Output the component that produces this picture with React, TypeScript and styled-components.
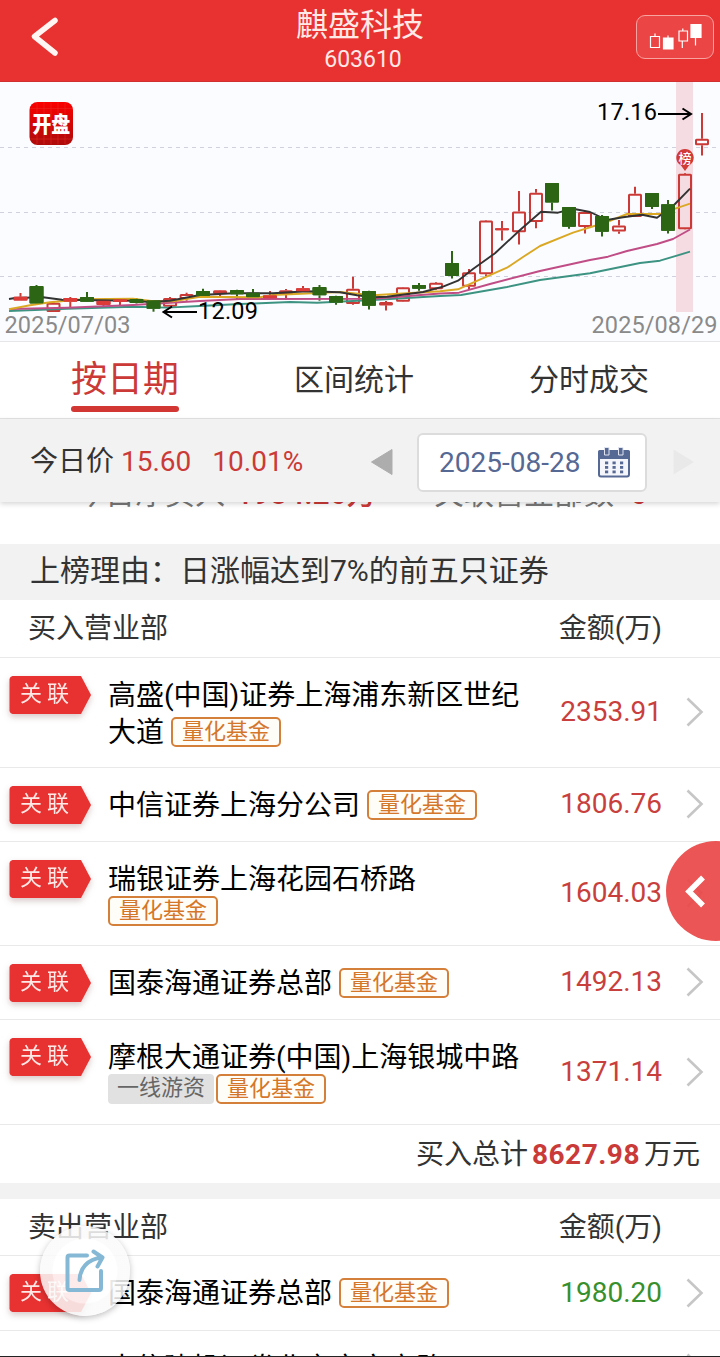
import React from "react";
import styled, { createGlobalStyle } from "styled-components";

const RED = "#e83131";
const UP = "#cb3a37";
const DOWN = "#2c6615";

const Global = createGlobalStyle`
  *, *::before, *::after { box-sizing: border-box; }
  html, body { margin: 0; padding: 0; background: #fff; }
  body {
    font-family: Roboto, "Noto Sans CJK SC", sans-serif;
    color: #333;
    overflow: hidden;
  }
`;

const Page = styled.div`
  position: relative;
  width: 720px;
  height: 1357px;
  overflow: hidden;
  background: #fff;
  border-bottom: 1px solid #222;
  display: flex;
  flex-direction: column;
  > * { flex-shrink: 0; }
`;

const Header = styled.header`
  height: 82px;
  background: ${RED};
  border-bottom: 1px solid #d0302f;
  display: grid;
  grid-template-columns: 110px 1fr 110px;
  padding: 0 6px 0 22px;
  color: #fff;
`;
const BackButton = styled.div`
  padding: 10px 0 0 0;
  height: 74px;
  svg { display: block; }
`;
const Titles = styled.div`
  display: flex;
  flex-direction: column;
  align-items: center;
  padding: 8px 10px 0 0;
  color: #ffe9e6;
`;
const Title = styled.div`
  margin-right: 6px;
  font-size: 32px;
  line-height: 35px;
`;
const Code = styled.div`
  font-size: 23px;
  line-height: 33px;
`;
const KlineButton = styled.div`
  justify-self: end;
  margin-top: 15px;
  width: 78px;
  height: 44px;
  border: 1px solid #f7a3a0;
  border-radius: 9px;
  background: #eb4545;
  svg { display: block; margin: -1px; }
`;

const ChartArea = styled.section`
  height: 260px;
  background: #fbfcff;
  border-bottom: 1px solid #e6e6e8;
  svg { display: block; }
`;

const Tabs = styled.nav`
  height: 77px;
  border-bottom: 1px solid #e4e4e4;
  display: grid;
  grid-template-columns: 250px 208px 1fr;
`;
const Tab = styled.div<{ $active?: boolean }>`
  display: flex;
  flex-direction: column;
  align-items: center;
  font-size: ${(p) => (p.$active ? 36 : 30)}px;
  line-height: ${(p) => (p.$active ? 52 : 54)}px;
  padding-top: ${(p) => (p.$active ? 12 : 11)}px;
  color: ${(p) => (p.$active ? UP : "#333")};
  &::after {
    content: "";
    display: ${(p) => (p.$active ? "block" : "none")};
    width: 108px;
    height: 6px;
    border-radius: 3px;
    background: #d23734;
  }
`;

const PriceBar = styled.section`
  position: relative;
  z-index: 2;
  height: 83px;
  background: #f2f2f2;
  box-shadow: 0 2px 5px rgba(0, 0, 0, 0.16);
  display: flex;
  align-items: center;
  padding: 2px 25px 0 30px;
  font-size: 28px;
`;
const Price = styled.div`
  width: 340px;
  white-space: pre;
  line-height: 40px;
  span { color: ${UP}; }
`;
const Today = styled.span`
  margin: 0 21px 0 7px;
`;
const DateBox = styled.div`
  width: 230px;
  height: 59px;
  margin: 2px 25px 0 24px;
  background: #fff;
  border: 2px solid #dcdcdc;
  border-radius: 6px;
  color: #566894;
  display: flex;
  align-items: center;
  justify-content: space-between;
  padding: 0 15px 0 20px;
`;

const Summary = styled.div`
  height: 42px;
  overflow: hidden;
`;
const SummaryLine = styled.div`
  margin-top: -28px;
  display: flex;
  padding-left: 75px;
  font-size: 30px;
  line-height: 40px;
  color: #777;
`;
const SummaryItem = styled.div`
  flex: none;
  width: 359px;
  white-space: nowrap;
`;
const SummaryValue = styled.b<{ $gap: number }>`
  margin-left: ${(p) => p.$gap}px;
  font-weight: 500;
  color: ${UP};
`;

const Reason = styled.div`
  height: 56px;
  background: #f2f2f2;
  padding-left: 30px;
  font-size: 30px;
  line-height: 53px;
`;

const TableHead = styled.div<{ $h: number }>`
  height: ${(p) => p.$h}px;
  border-bottom: 1px solid #e9e9e9;
  display: flex;
  justify-content: space-between;
  padding: 0 58px 0 28px;
  font-size: 28px;
  line-height: 57px;
`;

const Row = styled.div<{ $h: number }>`
  height: ${(p) => p.$h}px;
  border-bottom: 1px solid #e9e9e9;
  display: grid;
  grid-template-columns: 98px 424px 130px 1fr;
  padding: 0 16px 0 10px;
`;
const RelatedShadow = styled.div`
  padding-top: 18px;
  filter: drop-shadow(0 3px 3px rgba(120, 60, 60, 0.28));
`;
const Related = styled.div`
  width: 82px;
  height: 38px;
  margin-left: -1px;
  background: ${RED};
  clip-path: polygon(0.5px 3px, 1.5px 1px, 3.5px 0, 72px 0, 82px 19px, 72px 38px, 3.5px 38px, 1.5px 37px, 0.5px 35px);
  color: #ffe9e6;
  font-size: 22px;
  line-height: 36px;
  letter-spacing: 5px;
  padding-left: 11px;
`;
const Name = styled.div`
  padding-top: 19px;
  font-size: 28px;
  line-height: 37px;
  color: #000;
`;
const Tag = styled.span<{ $plain?: boolean; $gap?: number }>`
  display: inline-block;
  height: 30px;
  margin-left: ${(p) => p.$gap ?? 0}px;
  padding: 0 9px;
  border: ${(p) => (p.$plain ? "0" : "2px solid #d5803a")};
  border-radius: ${(p) => (p.$plain ? 4 : 5)}px;
  background: ${(p) => (p.$plain ? "#e1e1e1" : "#fffdf8")};
  color: ${(p) => (p.$plain ? "#666" : "#d5772b")};
  font-size: 22px;
  line-height: ${(p) => (p.$plain ? 28 : 25)}px;
  vertical-align: top;
  margin-top: 3px;
`;
const TagLine = styled.div`
  display: flex;
  margin-top: -5px;
`;
const Amount = styled.div<{ $down?: boolean }>`
  align-self: center;
  justify-self: end;
  margin-top: -1px;
  font-size: 28px;
  line-height: 36px;
  color: ${(p) => (p.$down ? "#37902c" : "#c93f3d")};
`;
const Chevron = styled.div`
  align-self: center;
  justify-self: end;
  margin-top: -1px;
  svg { display: block; }
`;

const Total = styled.div`
  height: 58px;
  padding-right: 20px;
  display: flex;
  justify-content: flex-end;
  font-size: 28px;
  line-height: 59px;
  b { color: #c93a38; letter-spacing: 0.5px; margin: 0 4px; }
`;
const Gap = styled.div`
  height: 16px;
  background: #f2f2f2;
`;

const Drawer = styled.div`
  position: absolute;
  z-index: 3;
  left: 666px;
  top: 841px;
  width: 100px;
  height: 100px;
  border-radius: 50%;
  background: rgba(234, 71, 71, 0.92);
  svg { display: block; }
`;
const Share = styled.div`
  position: absolute;
  z-index: 3;
  left: 40px;
  top: 1226px;
  width: 90px;
  height: 90px;
  border-radius: 50%;
  background: radial-gradient(circle, rgba(255, 255, 255, 0.9) 50%, rgba(250, 250, 250, 0.85) 52%);
  box-shadow: 0 2px 6px rgba(0, 0, 0, 0.25);
  svg { display: block; }
`;

type Candle = [x: number, top: number, bottom: number, high: number, low: number, kind: "h" | "r" | "g"];

const candles: Candle[] = [
  [20.5, 296.7, 300.5, 293, 300.5, "r"],
  [36.5, 286, 303.5, 285, 304, "g"],
  [53.5, 302.7, 312, 301, 312, "h"],
  [70.3, 298, 301.8, 297, 307, "r"],
  [87, 297, 301.7, 292, 302, "g"],
  [103.5, 300.8, 305, 300, 306.3, "r"],
  [120, 299.3, 302, 298, 305, "r"],
  [136.5, 299, 303, 298, 303.5, "g"],
  [153.5, 300.3, 308.7, 300, 311.7, "g"],
  [170, 298, 306.7, 297, 307.5, "h"],
  [186.6, 294, 299, 292.7, 300.7, "h"],
  [203, 291, 296, 288.7, 297.3, "g"],
  [220, 290.3, 294, 290, 296, "h"],
  [237, 290, 294.3, 289.7, 299, "g"],
  [253, 292.7, 297.3, 289, 299, "g"],
  [270, 295.3, 298.3, 291, 298.3, "r"],
  [286, 290.3, 295, 289, 299.7, "h"],
  [303, 288.3, 291.3, 286, 292, "r"],
  [319.5, 287, 295.3, 285, 300.7, "g"],
  [336, 296, 302.7, 295.7, 304.7, "g"],
  [353, 288.7, 304, 276.7, 304.7, "h"],
  [369, 291, 305.7, 290.7, 309.5, "g"],
  [386, 302, 305.3, 301, 310.5, "h"],
  [403, 287.3, 301.7, 287, 302, "h"],
  [419, 285, 288.7, 283, 290.7, "g"],
  [436, 282.7, 289.3, 282, 290, "h"],
  [452, 263, 276, 251, 278.5, "g"],
  [469, 272.3, 286.7, 269, 290, "h"],
  [486, 220.5, 274.3, 220, 276, "h"],
  [502, 228.3, 230.3, 221, 240.5, "r"],
  [519, 211.5, 232.3, 191, 244.5, "h"],
  [536, 192.7, 222, 189, 228.3, "h"],
  [552, 183, 202.5, 183, 210.5, "g"],
  [569, 207, 226.7, 207, 228.7, "g"],
  [585, 212, 227, 211, 233.5, "h"],
  [602, 216, 231.7, 215, 236.5, "g"],
  [619, 225.5, 231.5, 220, 233.7, "h"],
  [635, 193.7, 217, 186.7, 217, "h"],
  [652, 193, 207, 193, 209, "g"],
  [668, 204.3, 230.7, 200, 233.5, "g"],
  [685, 173.7, 229.3, 173, 229.5, "h"],
  [702, 138.7, 145.3, 113, 155.5, "h"],
];

const averages = [
  { color: "#3d9382", points: "9,311 67,308.7 133,306.7 167,307.6 200,306 240,304 290,302 317,302.7 373,300 440,296 461,295 507,287 540,280 590,273.3 640,263 660,260.7 690,251.7" },
  { color: "#c04d85", points: "9,309 67,307.7 133,305 200,301 240,299 373,298.7 440,293.5 459,292.7 490,284 540,271 590,260 608,256.7 627,251 657,244 673,239 690,229.5" },
  { color: "#dba824", points: "9,309.3 30,305.3 50,302.3 83,299.3 133,298.7 153,301.3 173,301.3 200,296.7 260,297.3 273,295 340,292 373,295.3 407,293.3 440,291.3 458,289.3 473,282.7 507,267.7 523,257 540,246 573,232.7 607,222 627,214 660,214 673,209.3 690,203.7" },
  { color: "#333", points: "9,299 15,298 43,297.3 62,299.7 80,300 133,300.7 150,302 170,300.7 200,295 233,293.3 273,293.3 307,291.3 340,292.3 357,295.3 373,297.3 387,296.7 423,292 443,286.7 458,280.7 473,269 495,253.3 520,230 541,211.7 558,212.7 573,208.7 590,212 607,220 623,217.3 642,214.7 657,217.7 673,206 690,188.7" },
];

function KChart() {
  return (
    <svg width="720" height="259" viewBox="0 82 720 259">
      <g stroke="#cfd1dc" strokeWidth="1" strokeDasharray="4 4">
        <line x1="0" y1="147.5" x2="720" y2="147.5" />
        <line x1="0" y1="212.5" x2="720" y2="212.5" />
        <line x1="0" y1="276.5" x2="720" y2="276.5" />
      </g>
      <rect x="676" y="82" width="17" height="230" fill="#f5dce2" />
      {candles.map(([x, top, bottom, high, low, kind]) => {
        const color = kind === "g" ? DOWN : UP;
        return (
          <g key={x} stroke={color} strokeWidth="2">
            <line x1={x} y1={high} x2={x} y2={top} />
            <line x1={x} y1={bottom} x2={x} y2={low} />
            {kind === "h" ? (
              <rect x={x - 6} y={top + 1} width="12" height={Math.max(bottom - top - 2, 1.5)} rx="0.5" fill="none" />
            ) : (
              <rect x={x - 7} y={top} width="14" height={bottom - top} rx="1" fill={color} stroke="none" />
            )}
          </g>
        );
      })}
      {averages.map((a) => (
        <polyline key={a.color} points={a.points} fill="none" stroke={a.color} strokeWidth="1.9" strokeLinejoin="round" />
      ))}
      {candles.filter((c) => c[5] !== "h").map(([x, top, bottom, , , kind]) => (
        <rect key={x} x={x - 7} y={top} width="14" height={bottom - top} rx="1" fill={kind === "g" ? DOWN : "#dc3b37"} />
      ))}
      <path d="M685 171 L681 165.5 A8.7 8.7 0 1 1 689 165.5 Z" fill="#d23a38" />
      <text x="685" y="162.5" fontSize="13" fontWeight="500" fill="#fff" textAnchor="middle">榜</text>
      <g fill="none" stroke="#000" strokeWidth="2">
        <path d="M658 114H690M682.500 108.500L691 114L682.500 119.500" />
        <path d="M197 312H165M172 306.500L163.500 312L172 317.500" />
      </g>
      <g fontSize="23.500" fill="#000">
        <text x="597" y="120" textLength="60">17.16</text>
        <text x="198" y="319" textLength="60">12.09</text>
      </g>
      <g fontSize="23.500" fill="#8a8a8a">
        <text x="4.500" y="333" textLength="126">2025/07/03</text>
        <text x="591.500" y="333" textLength="126">2025/08/29</text>
      </g>
      <defs>
        <linearGradient id="logo" x1="0" y1="0" x2="0" y2="1">
          <stop offset="0" stopColor="#fb0000" />
          <stop offset="1" stopColor="#ad0b0b" />
        </linearGradient>
      </defs>
      <rect x="29.500" y="102" width="43.500" height="43" rx="8" fill="url(#logo)" />
      <g stroke="#e8352a" strokeWidth="0.600" opacity="0.700">
        <path d="M30 108.500H72M30 139H72M37 102.500V144.500M44 102.500V144.500M51 102.500V144.500M58 102.500V144.500M65 102.500V144.500" />
      </g>
      <text x="51.300" y="132" fontSize="22" fontWeight="900" fill="#fff" textAnchor="middle" textLength="38" lengthAdjust="spacingAndGlyphs">开盘</text>
    </svg>
  );
}

function CalendarIcon() {
  return (
    <svg width="32" height="31" viewBox="0 0 32 31">
      <rect x="1" y="4" width="30" height="25.500" rx="2" fill="#f4f6fb" stroke="#566894" strokeWidth="2" />
      <path d="M0 5a2 2 0 0 1 2-2h28a2 2 0 0 1 2 2v7H0z" fill="#566894" />
      <g fill="#566894" stroke="#dfe4f0" strokeWidth="1">
        <path d="M6.500 0.500h4.500v7.500h-4.500z" />
        <path d="M20.500 0.500h4.500v7.500h-4.500z" />
      </g>
      <g fill="#566894">
        {[14.5, 19, 23.5].map((y) =>
          [7, 14.5, 22].map((x) => <rect key={`${x}-${y}`} x={x} y={y} width="3.200" height="2.800" />)
        )}
      </g>
    </svg>
  );
}

const ChevronIcon = () => (
  <svg width="18" height="30" viewBox="0 0 18 30">
    <path d="M1.500 1.500L15.500 15L1.500 28.500" fill="none" stroke="#c6c6c6" strokeWidth="2.600" />
  </svg>
);

interface Broker {
  name: string;
  amount: string;
  height: number;
  below?: boolean;
  hotMoney?: boolean;
  down?: boolean;
  unrelated?: boolean;
}

const buyers: Broker[] = [
  { name: "高盛(中国)证券上海浦东新区世纪大道", amount: "2353.91", height: 110 },
  { name: "中信证券上海分公司", amount: "1806.76", height: 74 },
  { name: "瑞银证券上海花园石桥路", amount: "1604.03", height: 104, below: true },
  { name: "国泰海通证券总部", amount: "1492.13", height: 74 },
  { name: "摩根大通证券(中国)上海银城中路", amount: "1371.14", height: 105, below: true, hotMoney: true },
];

const sellers: Broker[] = [
  { name: "国泰海通证券总部", amount: "1980.20", height: 75, down: true },
  { name: "中信建投证券北京市安立路", amount: "", height: 75, unrelated: true },
];

function BrokerRow({ b }: { b: Broker }) {
  return (
    <Row $h={b.height}>
      <RelatedShadow>{!b.unrelated && <Related>关联</Related>}</RelatedShadow>
      <Name>
        {b.name}
        {b.below && (
          <TagLine>
            {b.hotMoney && <Tag $plain>一线游资</Tag>}
            <Tag $gap={b.hotMoney ? 2 : 0}>量化基金</Tag>
          </TagLine>
        )}
        {!b.below && !b.unrelated && <Tag $gap={7}>量化基金</Tag>}
      </Name>
      <Amount $down={b.down}>{b.amount}</Amount>
      <Chevron>
        <ChevronIcon />
      </Chevron>
    </Row>
  );
}

export default function App() {
  return (
    <>
      <Global />
      <Page>
        <Header>
          <BackButton>
            <svg width="44" height="54" viewBox="0 0 44 54">
              <path d="M33 10.500L12.500 26.500L33 43" fill="none" stroke="#fff5f2" strokeWidth="5.500" strokeLinecap="round" strokeLinejoin="round" />
            </svg>
          </BackButton>
          <Titles>
            <Title>麒盛科技</Title>
            <Code>603610</Code>
          </Titles>
          <KlineButton>
            <svg width="78" height="44" viewBox="636 15 78 44">
              <g fill="none" stroke="#fff" strokeWidth="1.200">
                <path d="M650.500 36.500h9v11h-9zM655 33.500v3M679 31h8.500v10h-8.500zM682.800 28.500v2.500M682.300 41v7M668 35.500v3M695.500 37v8.500" />
                <path d="M663.500 38h9.500v11h-9.500zM691 24.500h10v13h-10z" fill="#fff" />
              </g>
            </svg>
          </KlineButton>
        </Header>
        <ChartArea>
          <KChart />
        </ChartArea>
        <Tabs>
          <Tab $active>按日期</Tab>
          <Tab>区间统计</Tab>
          <Tab>分时成交</Tab>
        </Tabs>
        <PriceBar>
          <Price>
            今日价<Today>15.60</Today><span>10.01%</span>
          </Price>
          <svg width="23" height="28" viewBox="0 0 23 28">
            <path d="M22 1.500V26.500L1.500 14Z" fill="#adadad" stroke="#adadad" strokeLinejoin="round" />
          </svg>
          <DateBox>
            2025-08-28
            <CalendarIcon />
          </DateBox>
          <svg width="23" height="28" viewBox="0 0 23 28">
            <path d="M1.500 1.500V26.500L22 14Z" fill="#e9e9e9" />
          </svg>
        </PriceBar>
        <Summary>
          <SummaryLine>
            <SummaryItem>
              今日净买入<SummaryValue $gap={11}>1984.26万</SummaryValue>
            </SummaryItem>
            <SummaryItem>
              关联营业部数<SummaryValue $gap={16}>6</SummaryValue>
            </SummaryItem>
          </SummaryLine>
        </Summary>
        <Reason>上榜理由：日涨幅达到7%的前五只证券</Reason>
        <TableHead $h={58}>
          <span>买入营业部</span>
          <span>金额(万)</span>
        </TableHead>
        {buyers.map((b) => (
          <BrokerRow key={b.name} b={b} />
        ))}
        <Total>
          买入总计<b>8627.98</b>万元
        </Total>
        <Gap />
        <TableHead $h={57}>
          <span>卖出营业部</span>
          <span>金额(万)</span>
        </TableHead>
        {sellers.map((b) => (
          <BrokerRow key={b.name} b={b} />
        ))}
        <Drawer>
          <svg width="54" height="100" viewBox="0 0 54 100">
            <path d="M37 36.500L23 50.500L37 64.500" fill="none" stroke="#fff" strokeWidth="5.500" />
          </svg>
        </Drawer>
        <Share>
          <svg width="90" height="90" viewBox="0 0 90 90">
            <g fill="none" stroke="#84b8d5" strokeWidth="4" strokeLinecap="round" strokeLinejoin="round">
              <path d="M47 29.500H29.500a2 2 0 0 0-2 2V62a2 2 0 0 0 2 2H59a2 2 0 0 0 2-2V45" />
              <path d="M39.500 54C40 43 47 33 62 31.500M53.500 25.500L62.500 31.500L57.500 40.500" />
            </g>
          </svg>
        </Share>
      </Page>
    </>
  );
}
